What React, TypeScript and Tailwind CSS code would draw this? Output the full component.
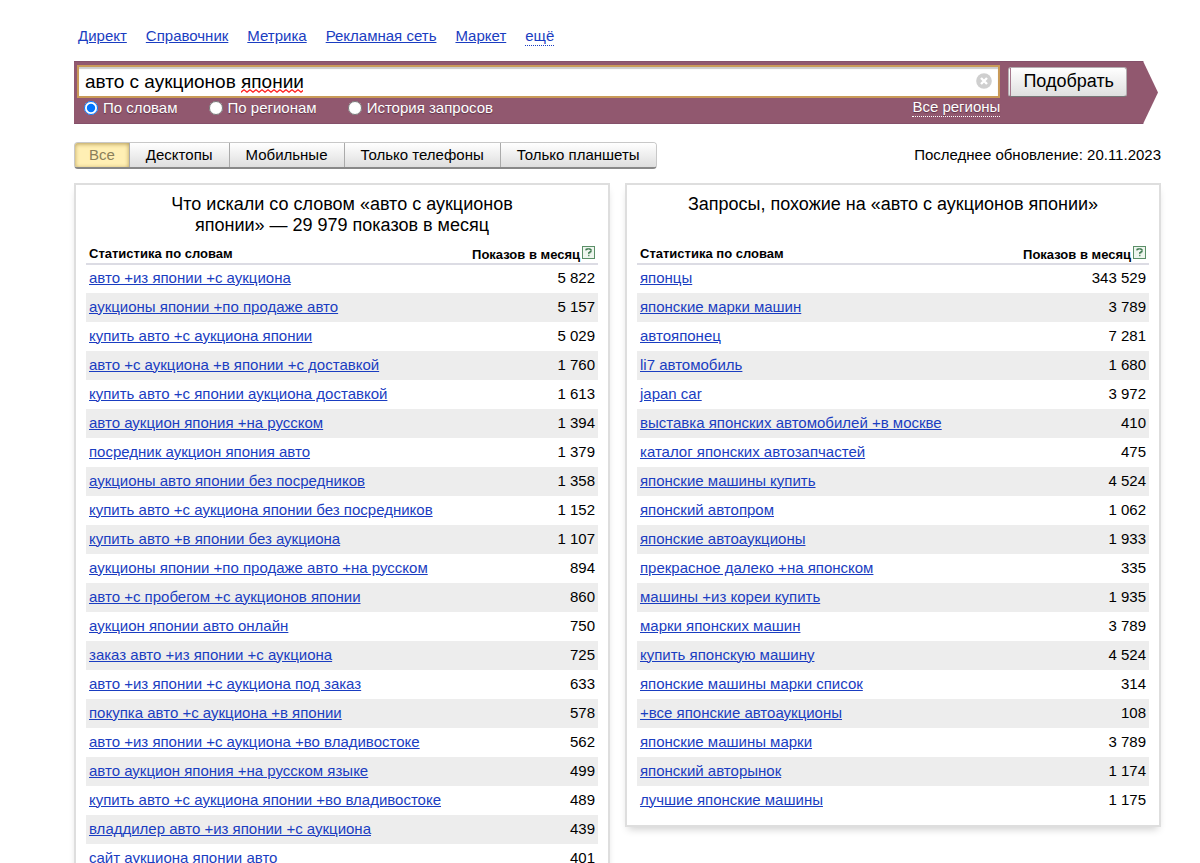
import React from 'react'
import clsx from 'clsx'

type Stat = { phrase: string; shows: string }

const services = ['Директ', 'Справочник', 'Метрика', 'Рекламная сеть', 'Маркет']

const modes = [
    { id: 'words', label: 'По словам' },
    { id: 'regions', label: 'По регионам' },
    { id: 'history', label: 'История запросов' },
]

const devices = ['Все', 'Десктопы', 'Мобильные', 'Только телефоны', 'Только планшеты']

const searched: Stat[] = [
    { phrase: 'авто +из японии +с аукциона', shows: '5 822' },
    { phrase: 'аукционы японии +по продаже авто', shows: '5 157' },
    { phrase: 'купить авто +с аукциона японии', shows: '5 029' },
    { phrase: 'авто +с аукциона +в японии +с доставкой', shows: '1 760' },
    { phrase: 'купить авто +с японии аукциона доставкой', shows: '1 613' },
    { phrase: 'авто аукцион япония +на русском', shows: '1 394' },
    { phrase: 'посредник аукцион япония авто', shows: '1 379' },
    { phrase: 'аукционы авто японии без посредников', shows: '1 358' },
    { phrase: 'купить авто +с аукциона японии без посредников', shows: '1 152' },
    { phrase: 'купить авто +в японии без аукциона', shows: '1 107' },
    { phrase: 'аукционы японии +по продаже авто +на русском', shows: '894' },
    { phrase: 'авто +с пробегом +с аукционов японии', shows: '860' },
    { phrase: 'аукцион японии авто онлайн', shows: '750' },
    { phrase: 'заказ авто +из японии +с аукциона', shows: '725' },
    { phrase: 'авто +из японии +с аукциона под заказ', shows: '633' },
    { phrase: 'покупка авто +с аукциона +в японии', shows: '578' },
    { phrase: 'авто +из японии +с аукциона +во владивостоке', shows: '562' },
    { phrase: 'авто аукцион япония +на русском языке', shows: '499' },
    { phrase: 'купить авто +с аукциона японии +во владивостоке', shows: '489' },
    { phrase: 'владдилер авто +из японии +с аукциона', shows: '439' },
    { phrase: 'сайт аукциона японии авто', shows: '401' },
]

const similar: Stat[] = [
    { phrase: 'японцы', shows: '343 529' },
    { phrase: 'японские марки машин', shows: '3 789' },
    { phrase: 'автояпонец', shows: '7 281' },
    { phrase: 'li7 автомобиль', shows: '1 680' },
    { phrase: 'japan car', shows: '3 972' },
    { phrase: 'выставка японских автомобилей +в москве', shows: '410' },
    { phrase: 'каталог японских автозапчастей', shows: '475' },
    { phrase: 'японские машины купить', shows: '4 524' },
    { phrase: 'японский автопром', shows: '1 062' },
    { phrase: 'японские автоаукционы', shows: '1 933' },
    { phrase: 'прекрасное далеко +на японском', shows: '335' },
    { phrase: 'машины +из кореи купить', shows: '1 935' },
    { phrase: 'марки японских машин', shows: '3 789' },
    { phrase: 'купить японскую машину', shows: '4 524' },
    { phrase: 'японские машины марки список', shows: '314' },
    { phrase: '+все японские автоаукционы', shows: '108' },
    { phrase: 'японские машины марки', shows: '3 789' },
    { phrase: 'японский авторынок', shows: '1 174' },
    { phrase: 'лучшие японские машины', shows: '1 175' },
]

const HelpIcon = () => (
    <svg width="13" height="13" viewBox="0 0 13 13" className="mb-1" aria-hidden="true">
        <rect x="0.5" y="0.5" width="12" height="12" fill="#eef5ee" stroke="#5b8f68" />
        <path d="M4 4.6V3.4h1V2.9h3v.6h1v2.2H8v1H6.8v1.2M6.8 8.8v1.4" fill="none" stroke="#3f7a50" strokeWidth="1.2" />
    </svg>
)

const StatPanel = ({ title, rows }: { title: string; rows: Stat[] }) => (
    <section className="flex-1 border-2 border-[#dedede] px-[10px] pb-[10px] shadow-[0_5px_8px_-3px_rgba(0,0,0,0.2)]">
        <h2 className="mx-auto h-[60px] max-w-[412px] pt-[9px] text-center text-[18px] leading-[21px]">{title}</h2>
        <table className="w-full border-collapse">
            <thead>
                <tr className="h-[19px] border-b-2 border-[#dcdce4] text-[13px] leading-[16px]">
                    <th className="pl-[3px] text-left font-bold">Статистика по словам</th>
                    <th className="pr-[3px] font-bold">
                        <span className="flex items-end justify-end gap-0.5">
                            Показов в месяц
                            <a href="#help" aria-label="Справка"><HelpIcon /></a>
                        </span>
                    </th>
                </tr>
            </thead>
            <tbody>
                {rows.map((row) => (
                    <tr key={row.phrase} className="h-[29px] text-[15px] leading-[18px] even:bg-[#ededed]">
                        <td className="pb-0.5 pl-[3px]">
                            <a href="#phrase" className="text-[#1a3dc1] underline">{row.phrase}</a>
                        </td>
                        <td className="pb-0.5 pr-[3px] text-right">{row.shows}</td>
                    </tr>
                ))}
            </tbody>
        </table>
    </section>
)

const App = () => {
    const [query, setQuery] = React.useState('авто с аукционов японии')
    const [mode, setMode] = React.useState('words')
    const [device, setDevice] = React.useState('Все')

    return (
        <div className="bg-white pl-[74px] pr-[39px] pt-[27px] font-['Liberation_Sans',Arial,sans-serif] text-[15px] leading-[18px] text-black">
            <nav className="flex gap-[19px] pl-1">
                {services.map((name) => (
                    <a key={name} href="#service" className="text-[#1a3dc1] underline">{name}</a>
                ))}
                <a href="#more" className="border-b border-dotted border-[#1a3dc1] text-[#1a3dc1]">ещё</a>
            </nav>

            <form
                className="mr-[3px] mt-[15px] flex h-[63px] items-start gap-2 border-y border-[#84506a] bg-[#91586f] pl-[3px] pr-[31px] pt-[3px] [clip-path:polygon(0_0,calc(100%-15px)_0,100%_50%,calc(100%-15px)_100%,0_100%)]"
                onSubmit={(e) => e.preventDefault()}
            >
                <div className="flex-1">
                    <div className="relative">
                        <input
                            type="text"
                            aria-label="Запрос"
                            spellCheck={false}
                            value={query}
                            onChange={(e) => setQuery(e.target.value)}
                            className="block h-[33px] w-full border-2 border-[#c99a58] bg-white px-[6px] text-[19px] shadow-[inset_0_2px_1px_#ccc] outline-none"
                        />
                        <svg className="absolute left-[164px] top-6" width="62" height="4" aria-hidden="true">
                            <defs>
                                <pattern id="wave" width="6" height="4" patternUnits="userSpaceOnUse">
                                    <path d="M-1.5 2L0 3.2 3 .8 6 3.2 7.5 2" fill="none" stroke="#f22" strokeWidth="1.3" />
                                </pattern>
                            </defs>
                            <rect width="62" height="4" fill="url(#wave)" />
                        </svg>
                        <button type="button" aria-label="Очистить" onClick={() => setQuery('')} className="absolute right-2 top-2">
                            <svg width="16" height="16" viewBox="0 0 16 16">
                                <circle cx="8" cy="8" r="7.8" fill="#cfcfcf" />
                                <path d="M5 5l6 6M11 5l-6 6" stroke="#fff" strokeWidth="2.4" />
                            </svg>
                        </button>
                    </div>
                    <div className="flex items-center text-white [text-shadow:0_1px_1px_#5e3347]">
                        {modes.map((m) => (
                            <label key={m.id} className="mr-6 flex items-center gap-[5px] pl-[7px]">
                                <input
                                    type="radio"
                                    name="mode"
                                    checked={mode === m.id}
                                    onChange={() => setMode(m.id)}
                                    className="size-3.5"
                                />
                                {m.label}
                            </label>
                        ))}
                        <a href="#regions" className="ml-auto border-b border-dotted border-white">Все регионы</a>
                    </div>
                </div>
                <button
                    type="submit"
                    className="mt-0.5 flex h-[30px] rounded-[3px] border border-[#b4aeb1] border-b-[#777] bg-linear-to-b from-white to-[#dfdfdf] text-[18px] leading-[27px]"
                >
                    <span className="ml-px h-full border-l border-[#a5788c] px-[12px]">Подобрать</span>
                </button>
            </form>

            <div className="mt-[18px] flex items-start justify-between">
                <div className="flex h-[27px] overflow-hidden rounded-[4px] border border-b-2 border-[#c8c8c8] border-b-[#888]">
                    {devices.map((name) => (
                        <button
                            key={name}
                            type="button"
                            onClick={() => setDevice(name)}
                            className={clsx(
                                'border-r border-[#aaa] px-4 first:px-[14px] last:border-r-0',
                                device === name
                                    ? 'bg-[#ffefb4] text-[#8b7f5a] shadow-[inset_0_1px_4px_#b39a55]'
                                    : 'bg-linear-to-b from-white to-[#dedede]',
                            )}
                        >
                            {name}
                        </button>
                    ))}
                </div>
                <p className="pt-1">Последнее обновление: 20.11.2023</p>
            </div>

            <main className="mt-[14px] flex items-start gap-[15px]">
                <StatPanel title="Что искали со словом «авто с аукционов японии» — 29 979 показов в месяц" rows={searched} />
                <StatPanel title="Запросы, похожие на «авто с аукционов японии»" rows={similar} />
            </main>
        </div>
    )
}

export default App
